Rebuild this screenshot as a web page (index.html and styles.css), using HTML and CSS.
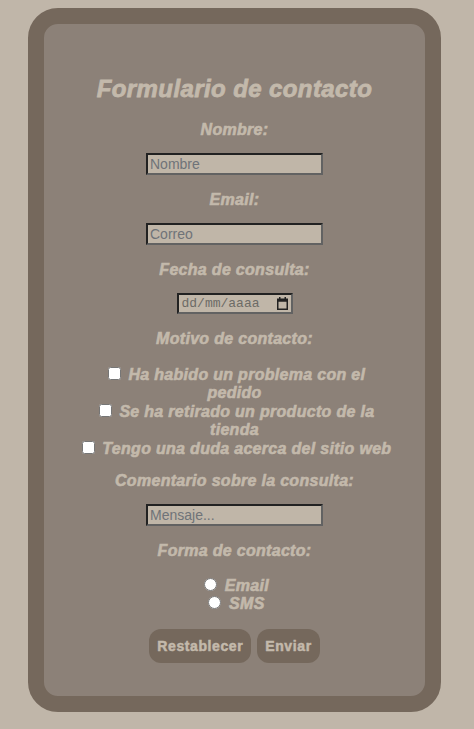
FILE: index.html
```html
<!DOCTYPE html>
<html lang="es">
<head>
<meta charset="utf-8">
<title>Formulario de contacto</title>
<link rel="stylesheet" href="styles.css">
</head>
<body>
<div class="card">
  <form class="form">
    <h1 class="title">Formulario de contacto</h1>

    <label class="label" for="nombre">Nombre:</label>
    <input class="field" id="nombre" type="text" placeholder="Nombre">

    <label class="label" for="email">Email:</label>
    <input class="field" id="email" type="text" placeholder="Correo">

    <label class="label" for="fecha">Fecha de consulta:</label>
    <div class="date" id="fecha">
      <span class="date-text">dd/mm/aaaa</span>
      <svg class="cal" width="11" height="13" viewBox="0 0 11 13" aria-hidden="true">
        <rect x="0.75" y="2.25" width="9.5" height="10" fill="none" stroke="#222" stroke-width="1.5"/>
        <rect x="0.75" y="2.25" width="9.5" height="2.5" fill="#222"/>
        <rect x="2" y="0" width="1.5" height="2.5" fill="#222"/>
        <rect x="7.5" y="0" width="1.5" height="2.5" fill="#222"/>
      </svg>
    </div>

    <p class="label">Motivo de contacto:</p>
    <div class="checks">
      <label class="opt"><input type="checkbox"> Ha habido un problema con el pedido</label>
      <label class="opt"><input type="checkbox"> Se ha retirado un producto de la tienda</label>
      <label class="opt"><input type="checkbox"> Tengo una duda acerca del sitio web</label>
    </div>

    <label class="label" for="msg">Comentario sobre la consulta:</label>
    <input class="field" id="msg" type="text" placeholder="Mensaje...">

    <p class="label">Forma de contacto:</p>
    <div class="radios">
      <label class="opt"><input type="radio" name="forma"> Email</label>
      <label class="opt"><input type="radio" name="forma"> SMS</label>
    </div>

    <div class="buttons">
      <button type="reset" class="btn">Restablecer</button>
      <button type="submit" class="btn">Enviar</button>
    </div>
  </form>
</div>
</body>
</html>
```

FILE: styles.css
```css
html, body {
  background: #c0b6a9;
}
body {
  margin: 8px;
  font-family: "Liberation Sans", Arial, sans-serif;
  color: #c3b9ab;
}
.card {
  width: 413px;
  height: 704px;
  box-sizing: border-box;
  margin-left: 20px;
  border: 16px solid #75685c;
  border-radius: 30px;
  background: #8c8178;
}
.form {
  display: flex;
  flex-direction: column;
  align-items: center;
  padding: 51px 30px 0;
  text-align: center;
}
.title {
  margin: 0 0 18px;
  font-size: 24px;
  line-height: 28px;
  font-weight: bold;
  font-style: italic;
  letter-spacing: 0.4px;
  -webkit-text-stroke: 0.8px #c3b9ab;
}
.label {
  display: block;
  margin: 0 0 14px;
  font-size: 16px;
  line-height: 18px;
  font-weight: bold;
  font-style: italic;
  letter-spacing: 0.3px;
  -webkit-text-stroke: 0.6px #c3b9ab;
}
.field {
  width: 177px;
  height: 22px;
  box-sizing: border-box;
  margin: 0 0 16px;
  padding: 1px 2px;
  border: 2px solid;
  border-color: #222 #626262 #626262 #222;
  background: #c0b6a8;
  font-family: "Liberation Sans", Arial, sans-serif;
  font-size: 14px;
  color: #333;
}
.field::placeholder {
  color: #6f7378;
}
.date {
  display: flex;
  align-items: center;
  justify-content: space-between;
  width: 116px;
  height: 21px;
  box-sizing: border-box;
  margin: 0 0 16px;
  padding: 0 3px 0 3px;
  border: 2px solid;
  border-color: #222 #626262 #626262 #222;
  background: #c0b6a8;
}
.date-text {
  font-family: "Liberation Mono", "DejaVu Sans Mono", monospace;
  font-size: 13px;
  color: #6d6b66;
}
.cal {
  display: block;
}
.checks,
.radios {
  display: flex;
  flex-direction: column;
  align-items: center;
}
.checks {
  width: 315px;
  margin: 4px 0 14px;
}
.radios {
  margin: 3px 0 15px;
}
.opt {
  display: block;
  font-size: 16px;
  line-height: 18.4px;
  font-weight: bold;
  font-style: italic;
  letter-spacing: 0.3px;
  -webkit-text-stroke: 0.6px #c3b9ab;
}
.opt input {
  margin: 0 3px 0 4px;
  vertical-align: baseline;
}
.buttons {
  display: flex;
  gap: 6px;
}
.btn {
  height: 34px;
  padding: 0 8px;
  border: none;
  border-radius: 12px;
  background: #75685c;
  color: #c3b9ab;
  font-family: "Liberation Sans", Arial, sans-serif;
  font-size: 14px;
  font-weight: bold;
  letter-spacing: 0.6px;
  -webkit-text-stroke: 0.5px #c3b9ab;
}
```
